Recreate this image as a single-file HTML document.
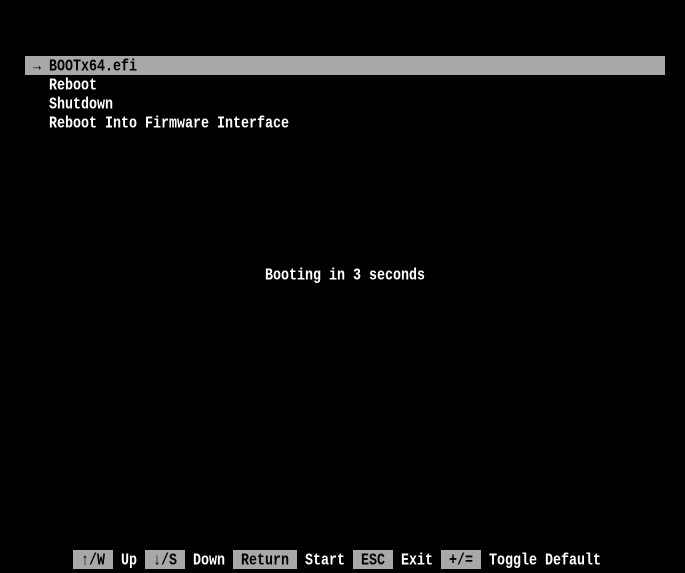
<!DOCTYPE html>
<html><head><meta charset="utf-8"><style>
html,body{margin:0;padding:0;background:#000;width:685px;height:570px;overflow:hidden}
.t{position:absolute;height:19px;line-height:19px;font-family:"Liberation Mono","DejaVu Sans Mono",monospace;font-size:13.33px;font-weight:bold;color:#fff;white-space:pre;margin-top:2px}
.t span.s{display:inline-block;transform:scaleY(1.22);transform-origin:50% 55%}
.gb{position:absolute;background:#a8a8a8;height:19px}
</style></head><body>
<div class="gb" style="left:25px;top:56px;width:640px"></div>
<div class="t" style="left:33px;top:56px;color:#000"><span class="s">→ BOOTx64.efi</span></div>
<div class="t" style="left:49px;top:75px"><span class="s">Reboot</span></div>
<div class="t" style="left:49px;top:94px"><span class="s">Shutdown</span></div>
<div class="t" style="left:49px;top:113px"><span class="s">Reboot Into Firmware Interface</span></div>
<div class="t" style="left:265px;top:265px"><span class="s">Booting in 3 seconds</span></div>

<div class="gb" style="left:73px;top:550px;width:40px"></div>
<div class="gb" style="left:145px;top:550px;width:40px"></div>
<div class="gb" style="left:233px;top:550px;width:64px"></div>
<div class="gb" style="left:353px;top:550px;width:40px"></div>
<div class="gb" style="left:441px;top:550px;width:40px"></div>
<div class="t" style="left:81px;top:550px;color:#000"><span class="s">↑/W</span></div>
<div class="t" style="left:121px;top:550px"><span class="s">Up</span></div>
<div class="t" style="left:153px;top:550px;color:#000"><span class="s">↓/S</span></div>
<div class="t" style="left:193px;top:550px"><span class="s">Down</span></div>
<div class="t" style="left:241px;top:550px;color:#000"><span class="s">Return</span></div>
<div class="t" style="left:305px;top:550px"><span class="s">Start</span></div>
<div class="t" style="left:361px;top:550px;color:#000"><span class="s">ESC</span></div>
<div class="t" style="left:401px;top:550px"><span class="s">Exit</span></div>
<div class="t" style="left:449px;top:550px;color:#000"><span class="s">+/=</span></div>
<div class="t" style="left:489px;top:550px"><span class="s">Toggle Default</span></div>
</body></html>
